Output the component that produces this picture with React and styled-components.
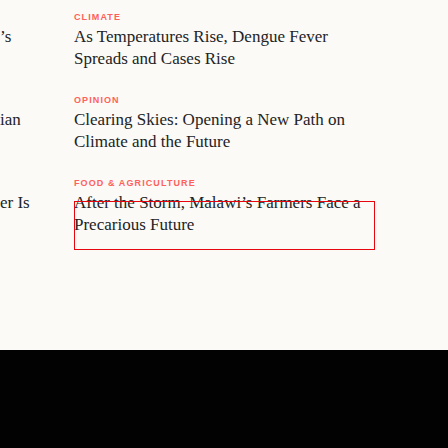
import React from "react";
import styled, { createGlobalStyle } from "styled-components";

const GlobalStyle = createGlobalStyle`
  html, body {
    margin: 0;
    padding: 0;
    background: #fbfaf6;
  }
  #root {
    min-height: 448px;
    display: flex;
    flex-direction: column;
  }
`;

const Page = styled.div`
  flex: 1;
  display: flex;
  flex-direction: column;
  overflow: hidden;
`;

const Content = styled.section`
  height: 350px;
  box-sizing: border-box;
  padding-top: 11px;
  display: grid;
  grid-template-columns: 30px 301px;
  column-gap: 44px;
  overflow: hidden;
`;

const Column = styled.div`
  display: flex;
  flex-direction: column;
  gap: 24px;
  overflow: hidden;
`;

const Story = styled.article`
  display: flex;
  flex-direction: column;
  gap: 3px;
`;

const Label = styled.div`
  font-family: "Liberation Sans", Arial, sans-serif;
  font-weight: 700;
  font-size: 9px;
  line-height: 12px;
  height: 12px;
  letter-spacing: 1.1px;
  text-transform: uppercase;
  color: #ff615b;
  white-space: nowrap;
`;

const Title = styled.h3`
  position: relative;
  margin: 0;
  font-family: "Liberation Serif", "Times New Roman", serif;
  font-weight: 400;
  font-size: 17px;
  line-height: 22px;
  height: 44px;
  color: #222326;
  white-space: ${(p) => (p.$clipped ? "nowrap" : "normal")};

  ${(p) =>
    p.$focused &&
    `
    &::after {
      content: "";
      position: absolute;
      left: 0;
      right: 0;
      top: 9px;
      height: 47px;
      border: 1.5px solid #e8060e;
      pointer-events: none;
    }
  `}
`;

const Footer = styled.footer`
  flex: 1;
  min-height: 98px;
  background: #020202;
`;

const sideStories = ["’s", "ian", "er Is"];

const stories = [
  { label: "Climate", title: "As Temperatures Rise, Dengue Fever Spreads and Cases Rise" },
  { label: "Opinion", title: "Clearing Skies: Opening a New Path on Climate and the Future" },
  {
    label: "Food & Agriculture",
    title: "After the Storm, Malawi’s Farmers Face a Precarious Future",
    focused: true,
  },
];

export default function App() {
  return (
    <>
      <GlobalStyle />
      <Page>
        <Content>
          <Column>
            {sideStories.map((t, i) => (
              <Story key={i}>
                <Label />
                <Title $clipped>{t}</Title>
              </Story>
            ))}
          </Column>
          <Column>
            {stories.map((s, i) => (
              <Story key={i}>
                <Label>{s.label}</Label>
                <Title $focused={s.focused}>{s.title}</Title>
              </Story>
            ))}
          </Column>
        </Content>
        <Footer />
      </Page>
    </>
  );
}
